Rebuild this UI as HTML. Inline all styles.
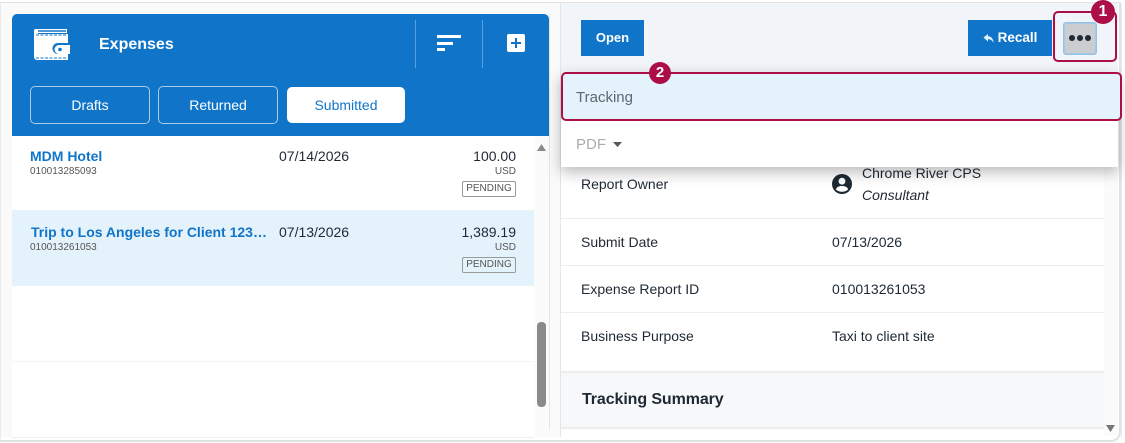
<!DOCTYPE html>
<html><head><meta charset="utf-8">
<style>
html,body{margin:0;padding:0;background:#fff}
body{width:1125px;height:443px;position:relative;overflow:hidden;font-family:"Liberation Sans",sans-serif;color:#1f2933}
.a{position:absolute;white-space:nowrap}
.t{font-size:14px;line-height:16px}
.tab{position:absolute;top:86px;height:36px;width:118px;border:1px solid #a9cbe8;border-radius:5px;color:#fff;font-size:14px;line-height:36px;text-align:center}
.btn{position:absolute;background:#1075c9;color:#fff;font-weight:bold;font-size:13px;text-align:center}
.name{color:#1075c9;font-weight:bold;font-size:14px;line-height:16px}
.sub{font-size:10px;line-height:12px;color:#555}
.pend{position:absolute;left:462px;width:52px;height:14px;border:1px solid #999;border-radius:2px;font-size:10px;line-height:14px;text-align:center;color:#555}
.hr{position:absolute;left:561px;width:543px;height:1px;background:#ececec}
</style></head><body>
<!-- frame -->
<div class="a" style="left:1px;top:3px;width:559px;height:434px;background:#fafafa"></div>
<div class="a" style="left:0;top:2px;width:1118px;height:1px;background:#e8e8e8"></div>
<div class="a" style="left:0;top:3px;width:1px;height:437px;background:#ececec"></div>
<div class="a" style="left:561px;top:3px;width:557px;height:433px;background:#fff"></div>
<div class="a" style="left:-20px;top:2px;width:1138px;height:437px;border:1px solid #e2e2e2;border-right-width:2px;border-bottom-width:2px;border-radius:0 0 10px 0;box-sizing:content-box"></div>
<div class="a" style="left:1121px;top:3px;width:1px;height:436px;background:#ededed"></div>

<!-- left panel -->
<div class="a" style="left:12px;top:14px;width:537px;height:122px;background:#1075c9;border-radius:5px 5px 0 0"></div>
<svg class="a" style="left:33px;top:28px" width="40" height="36" viewBox="0 0 40 36">
<path d="M1 3a2 2 0 0 1 2-2h31v4H5v1h30v9H25a5 5 0 0 0 0 11h10v6H4a3 3 0 0 1-3-3z" fill="#fff"/>
<path d="M26 17h11v9H26a4.500 4.500 0 0 1 0-9z" fill="#fff"/>
<path d="M3 7h31M3 30h31" stroke="#1075c9" stroke-width="1" stroke-dasharray="3 1.500" fill="none"/>
<circle cx="27" cy="21.500" r="1.800" fill="#1075c9"/>
<path d="M5 3h28" stroke="#1075c9" stroke-width="1.500"/>
</svg>
<div class="a" style="left:99px;top:36px;color:#fff;font-weight:bold;font-size:16px;line-height:18px">Expenses</div>
<div class="a" style="left:415px;top:20px;width:1px;height:48px;background:#5a9fd9"></div>
<div class="a" style="left:482px;top:20px;width:1px;height:48px;background:#5a9fd9"></div>
<div class="a" style="left:437px;top:35px;width:24px;height:3px;background:#fff"></div>
<div class="a" style="left:437px;top:42px;width:16px;height:3px;background:#fff"></div>
<div class="a" style="left:437px;top:48px;width:8px;height:3px;background:#fff"></div>
<div class="a" style="left:507px;top:34px;width:18px;height:18px;background:#fff;border-radius:2px"></div>
<div class="a" style="left:511px;top:42px;width:10px;height:2px;background:#1075c9"></div>
<div class="a" style="left:515px;top:38px;width:2px;height:10px;background:#1075c9"></div>
<div class="tab" style="left:30px">Drafts</div>
<div class="tab" style="left:158px">Returned</div>
<div class="tab" style="left:287px;width:118px;height:36px;top:87px;border:0;background:#fff;color:#1075c9;line-height:36px">Submitted</div>

<!-- list -->
<div class="a" style="left:12px;top:136px;width:522px;height:301px;background:#fff"></div>
<div class="a" style="left:12px;top:210px;width:522px;height:76px;background:#e4f2fc"></div>
<div class="a" style="left:12px;top:361px;width:522px;height:1px;background:#f4f4f4"></div>
<div class="a" style="left:12px;top:437px;width:522px;height:1px;background:#eee"></div>

<div class="a name" style="left:30px;top:148px">MDM Hotel</div>
<div class="a sub" style="left:30px;top:166px">010013285093</div>
<div class="a t" style="left:279px;top:148px">07/14/2026</div>
<div class="a t" style="right:609px;top:148px">100.00</div>
<div class="a sub" style="right:609px;top:166px">USD</div>
<div class="pend" style="top:181px">PENDING</div>

<div class="a name" style="left:31px;top:224px">Trip to Los Angeles for Client 123…</div>
<div class="a sub" style="left:30px;top:242px">010013261053</div>
<div class="a t" style="left:279px;top:224px">07/13/2026</div>
<div class="a t" style="right:609px;top:224px">1,389.19</div>
<div class="a sub" style="right:609px;top:242px">USD</div>
<div class="pend" style="top:257px">PENDING</div>

<!-- left scrollbar -->
<div class="a" style="left:534px;top:136px;width:15px;height:301px;background:#fbfbfb"></div>
<div class="a" style="left:549px;top:14px;width:1px;height:416px;background:#e6e6e6"></div>
<div class="a" style="left:560px;top:3px;width:1px;height:434px;background:#e6e6e6"></div>
<svg class="a" style="left:537px;top:144px" width="9" height="7"><path d="M4.500 0L9 7H0z" fill="#8a8a8a"/></svg>
<div class="a" style="left:537px;top:322px;width:9px;height:85px;background:#8a8a8a;border-radius:4px"></div>

<!-- right header -->
<div class="a" style="left:561px;top:3px;width:557px;height:70px;background:#f1f4f8"></div>
<div class="btn" style="left:581px;top:20px;width:63px;height:36px;line-height:35px">Open</div>
<div class="btn" style="left:968px;top:20px;width:84px;height:36px;line-height:36px;font-size:13.500px"><svg style="vertical-align:-1px;margin-right:4px" width="11" height="9" viewBox="0 0 10 9"><path d="M0 3.500L4.500 0v2.200C8 2.400 10 4.800 10 9 8.800 6.600 7.500 5.300 4.500 5.300V7.500z" fill="#e4f0fa"/></svg>Recall</div>
<div class="a" style="left:1063px;top:22px;width:32px;height:31px;background:#cbced1;border:1px solid #8fc3ec;border-radius:3px;box-shadow:0 0 0 0.500px #8fc3ec inset"></div>
<div class="a" style="left:1069px;top:35px;width:6px;height:6px;border-radius:50%;background:#1f2933"></div>
<div class="a" style="left:1077px;top:35px;width:6px;height:6px;border-radius:50%;background:#1f2933"></div>
<div class="a" style="left:1085px;top:35px;width:6px;height:6px;border-radius:50%;background:#1f2933"></div>
<div class="a" style="left:1053px;top:11px;width:60px;height:47px;border:2.500px solid #ab0f45;border-radius:5px"></div>
<div class="a" style="left:1091px;top:0;width:24px;height:24px;border-radius:50%;background:#ab0f45;color:#fff;font-weight:bold;font-size:16px;line-height:24px;text-align:center">1</div>

<!-- right rows -->
<div class="a t" style="left:581px;top:176px">Report Owner</div>
<svg class="a" style="left:832px;top:174px" width="20" height="20" viewBox="0 0 20 20"><circle cx="10" cy="10" r="10" fill="#1f2933"/><circle cx="10" cy="7.200" r="3.400" fill="#fff"/><path d="M3.800 15.200C5 12.600 7.500 12 10 12s5 .6 6.200 3.200C14.800 16.900 12.500 17.800 10 17.800s-4.800-.9-6.200-2.600z" fill="#fff"/></svg>
<div class="a t" style="left:862px;top:165px">Chrome River CPS</div>
<div class="a t" style="left:862px;top:187px;font-style:italic">Consultant</div>
<div class="hr" style="top:218px"></div>
<div class="a t" style="left:581px;top:234px">Submit Date</div>
<div class="a t" style="left:832px;top:234px">07/13/2026</div>
<div class="hr" style="top:265px"></div>
<div class="a t" style="left:581px;top:281px">Expense Report ID</div>
<div class="a t" style="left:832px;top:281px">010013261053</div>
<div class="hr" style="top:312px"></div>
<div class="a t" style="left:581px;top:328px">Business Purpose</div>
<div class="a t" style="left:832px;top:328px">Taxi to client site</div>
<div class="a" style="left:561px;top:371px;width:543px;height:58px;box-sizing:border-box;background:#f7f8fa;border-top:2px solid #eceded;border-bottom:2px solid #eceded"></div>
<div class="a" style="left:582px;top:391px;font-weight:bold;font-size:16px;line-height:18px;letter-spacing:-.1px">Tracking Summary</div>
<!-- right scrollbar -->
<div class="a" style="left:1104px;top:73px;width:14px;height:363px;background:#fbfbfb"></div>
<svg class="a" style="left:1106px;top:425px" width="9" height="7"><path d="M4.500 7L9 0H0z" fill="#777"/></svg>

<!-- dropdown -->
<div class="a" style="left:561px;top:73px;width:557px;height:94px;background:#fff;box-shadow:0 5px 14px rgba(0,0,0,.28)"></div>
<div class="a" style="left:561px;top:72px;width:561px;height:49px;box-sizing:border-box;background:#e4f2fc;border:2.500px solid #ab0f45;border-radius:5px"></div>
<div class="a" style="left:576px;top:90px;font-size:15px;line-height:16px;color:#5f6770">Tracking</div>
<div class="a" style="left:576px;top:137px;font-size:15px;line-height:16px;color:#a9adb1">PDF</div>
<svg class="a" style="left:613px;top:142px" width="9" height="5"><path d="M0 0H9L4.500 5z" fill="#555"/></svg>
<div class="a" style="left:649px;top:62px;width:22px;height:22px;border-radius:50%;background:#ab0f45;color:#fff;font-weight:bold;font-size:15px;line-height:22px;text-align:center">2</div>
</body></html>
